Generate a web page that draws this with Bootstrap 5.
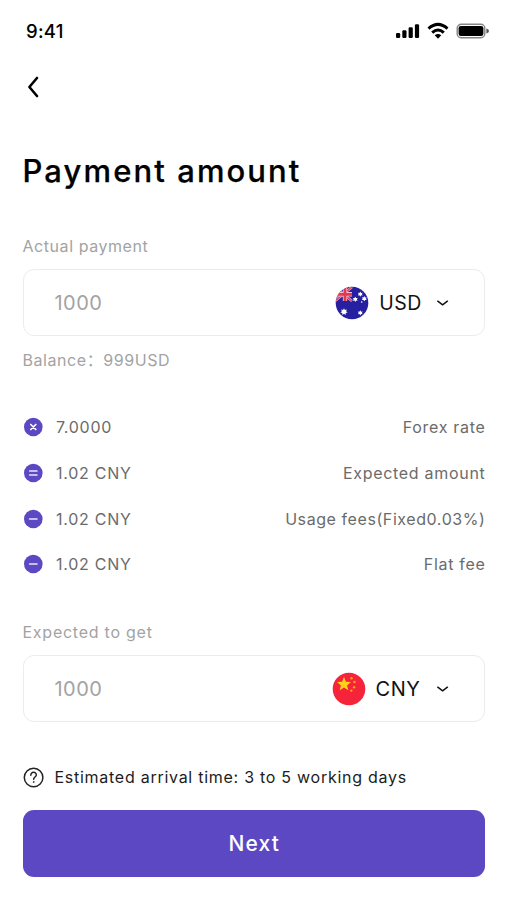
<!DOCTYPE html>
<html lang="en">
<head>
<meta charset="utf-8">
<meta name="viewport" content="width=device-width, initial-scale=1">
<title>Payment amount</title>
<link href="https://cdn.jsdelivr.net/npm/bootstrap@5.3.0/dist/css/bootstrap.min.css" rel="stylesheet">
<style>
body{font-family:Inter,"Liberation Sans",sans-serif;background:#fff;color:#000;overflow:hidden}
.screen{height:900px;padding:0 22px 0 22.5px;line-height:24px;font-size:16px;letter-spacing:.56px}
.screen svg{display:block;flex:none}
.status{height:62px;padding-left:3.5px;margin-right:-5px}
.clock{font-size:18.5px;font-weight:500;letter-spacing:.25px}
.back{height:50px;padding-left:3.5px}
.page-title{font-size:31px;font-weight:500;letter-spacing:2.1px;line-height:40px;margin:39px 0 0 0;-webkit-text-stroke:.25px #000}
.caption-text{color:#a3a3a3}
.caption-pay{margin-top:43px}
.caption-get{margin-top:21.1px;letter-spacing:.75px}
.balance{margin-top:12px}
.wide-colon{font-family:"Noto Sans CJK SC",sans-serif;line-height:1}
.amount-box{height:67px;margin-top:11px;border:1.5px solid #ececec;border-radius:11px;padding:1px 35.5px 0 31px}
.amount-input{width:120px;font-size:20px;letter-spacing:.45px;color:#a3a3a3;outline:0}
.amount-input::placeholder{color:#a3a3a3;opacity:1}
.currency{font-size:20px;color:#111;gap:10px}
.code-usd{font-size:19.5px}
.code-cny{margin:0 1.5px 0 -.5px}
.currency .chev{margin-left:4.5px}
.fees{margin-top:43px;color:#6b6b6b}
.fees li{height:45.8px}
.fees li:last-child{height:46.2px}
.fee-value{gap:13.5px;letter-spacing:.74px}
.fee-name{letter-spacing:.7px;margin-right:-.5px}
.fee-name.tight{letter-spacing:.58px}
.note{color:#1c1c1c;letter-spacing:.73px;margin-top:43.5px;gap:11px}
.btn-next{--bs-btn-bg:#5b48c2;--bs-btn-color:#fff;--bs-btn-hover-bg:#4f3db3;--bs-btn-hover-color:#fff;height:67px;margin-top:20.5px;padding:2px 0 0 1px;border:0;border-radius:11px;font-size:21px;font-weight:500;letter-spacing:1.1px}
</style>
</head>
<body>
<main class="screen d-flex flex-column">
  <div class="status d-flex align-items-center justify-content-between">
    <span class="clock">9:41</span>
    <svg width="94" height="20" viewBox="0 0 94 20">
      <rect x="0" y="12" width="4.2" height="5" rx="1.2"/><rect x="6.3" y="9.3" width="4.2" height="7.7" rx="1.2"/><rect x="12.6" y="6.3" width="4.2" height="10.7" rx="1.2"/><rect x="18.9" y="3.2" width="4.2" height="13.8" rx="1.2"/>
      <g fill="none" stroke="#000" stroke-width="3"><path d="M32.5 7.6Q42 -.8 51.5 7.6"/><path d="M36.2 11.7Q42 6.4 47.8 11.7"/></g>
      <path d="M38.7 14.3Q42 11.7 45.3 14.3L42 17.7z"/>
      <rect x="61.2" y="3.3" width="27.6" height="13.4" rx="4" fill="none" stroke="#858585" stroke-width="1.4"/>
      <rect x="62.6" y="4.9" width="24.8" height="10.2" rx="2.4"/>
      <path d="M90.4 7.6Q93 8.4 93 10T90.4 12.4z" fill="#555"/>
    </svg>
  </div>
  <div class="back d-flex align-items-center">
    <svg width="14" height="22" viewBox="0 0 14 22" fill="none" stroke="#000" stroke-width="2.6" stroke-linecap="round" stroke-linejoin="round" role="img" aria-label="Back"><path d="M11 2 3.4 11l7.6 9"/></svg>
  </div>
  <h1 class="page-title">Payment amount</h1>
  <div class="caption-text caption-pay">Actual payment</div>
  <div class="amount-box d-flex align-items-center justify-content-between">
    <input class="amount-input border-0 p-0 bg-transparent" placeholder="1000" aria-label="Actual payment">
    <div class="currency d-flex align-items-center">
      <svg width="34" height="34" viewBox="0 0 34 34">
        <defs><clipPath id="disc"><circle cx="17" cy="17" r="16.3"/></clipPath></defs>
        <g clip-path="url(#disc)"><rect width="34" height="34" fill="#261fa0"/>
        <path d="M0 1 17 15M17 1 0 15" stroke="#d9a8d0" stroke-width="2.6"/><path d="M0 1 17 15M17 1 0 15" stroke="#e83a50" stroke-width="1.3"/>
        <path d="M10 0V15M0 8.3H17" stroke="#f0c4d4" stroke-width="4.4"/><path d="M10 0V15M0 8.3H17" stroke="#e8364c" stroke-width="2.8"/></g>
        <g fill="#fff"><path d="m9 22.2.9 1.8 2-.5-.8 1.8 1.5 1.2-1.9.5v2l-1.7-1.2-1.7 1.2v-2l-1.9-.5 1.5-1.2-.8-1.8 2 .5z"/><path id="star" d="m25.3 5.5.8 1.4 1.6-.2-.8 1.4.8 1.4-1.6-.2-.8 1.4-.8-1.4-1.6.2.8-1.4-.8-1.4 1.6.2z"/><use href="#star" x="-5" y="5.2"/><use href="#star" x="4" y="4.6"/><use href="#star" x="0" y="18.8"/><circle cx="26.7" cy="16" r=".8"/></g>
      </svg>
      <span class="code-usd">USD</span>
      <svg class="chev" width="12" height="8" viewBox="0 0 12 8" fill="none" stroke="#111" stroke-width="1.5" stroke-linecap="round" stroke-linejoin="round"><path d="M.8 2.2l4.8 3.6 4.8-3.6"/></svg>
    </div>
  </div>
  <div class="caption-text balance">Balance<span class="wide-colon" lang="zh-CN">：</span>999USD</div>
  <ul class="fees list-unstyled mb-0">
    <li class="d-flex align-items-start justify-content-between"><span class="fee-value d-flex align-items-center"><svg width="20" height="20" viewBox="0 0 20 20" fill="none" stroke="#fff" stroke-width="1.7" stroke-linecap="round"><circle cx="10.3" cy="10" r="9.3" fill="#5b48c2" stroke="none"/><path d="m7.8 7.5 5 5m0-5-5 5"/></svg>7.0000</span><span class="fee-name">Forex rate</span></li>
    <li class="d-flex align-items-start justify-content-between"><span class="fee-value d-flex align-items-center"><svg width="20" height="20" viewBox="0 0 20 20" fill="none" stroke="#e8e4ff" stroke-width="1.5" stroke-linecap="round"><circle cx="10.3" cy="10" r="9.3" fill="#5b48c2" stroke="none"/><path d="M6.6 8.1H14m-7.4 3.8H14"/></svg>1.02 CNY</span><span class="fee-name">Expected amount</span></li>
    <li class="d-flex align-items-start justify-content-between"><span class="fee-value d-flex align-items-center"><svg width="20" height="20" viewBox="0 0 20 20" fill="none" stroke="#e8e4ff" stroke-width="1.6" stroke-linecap="round"><circle cx="10.3" cy="10" r="9.3" fill="#5b48c2" stroke="none"/><path d="M6.6 10H14"/></svg>1.02 CNY</span><span class="fee-name tight">Usage fees(Fixed0.03%)</span></li>
    <li class="d-flex align-items-start justify-content-between"><span class="fee-value d-flex align-items-center"><svg width="20" height="20" viewBox="0 0 20 20" fill="none" stroke="#e8e4ff" stroke-width="1.6" stroke-linecap="round"><circle cx="10.3" cy="10" r="9.3" fill="#5b48c2" stroke="none"/><path d="M6.6 10H14"/></svg>1.02 CNY</span><span class="fee-name">Flat fee</span></li>
  </ul>
  <div class="caption-text caption-get">Expected to get</div>
  <div class="amount-box d-flex align-items-center justify-content-between">
    <input class="amount-input border-0 p-0 bg-transparent" placeholder="1000" aria-label="Expected to get">
    <div class="currency d-flex align-items-center">
      <svg width="34" height="34" viewBox="0 0 34 34">
        <circle cx="17" cy="17" r="16.3" fill="#f5243b"/>
        <path fill="#ffd21a" d="m12 5 1.9 4.7 5 .4-3.8 3.3 1.2 4.9-4.3-2.7-4.3 2.7 1.2-4.9-3.8-3.3 5-.4z"/>
        <g fill="#ff9e20"><circle cx="19.5" cy="6.2" r="1.2"/><circle cx="22.4" cy="10" r="1.2"/><circle cx="22.1" cy="15.2" r="1.2"/><circle cx="19.3" cy="18.6" r="1.2"/></g>
      </svg>
      <span class="code-cny">CNY</span>
      <svg class="chev" width="12" height="8" viewBox="0 0 12 8" fill="none" stroke="#111" stroke-width="1.5" stroke-linecap="round" stroke-linejoin="round"><path d="M.8 2.2l4.8 3.6 4.8-3.6"/></svg>
    </div>
  </div>
  <div class="note d-flex align-items-center">
    <svg width="21" height="21" viewBox="0 0 21 21" fill="none" stroke="#222" stroke-width="1.5" stroke-linecap="round"><circle cx="10.6" cy="10.5" r="9.3"/><path d="M7.8 8.2C7.8 4.2 13.5 4.6 13.3 8c-.1 2-2.7 2.1-2.7 4.3"/><circle cx="10.6" cy="15" r=".5" fill="#222" stroke-width=".6"/></svg>
    <span>Estimated arrival time: 3 to 5 working days</span>
  </div>
  <button type="button" class="btn btn-next w-100">Next</button>
</main>
<script src="https://cdn.jsdelivr.net/npm/bootstrap@5.3.0/dist/js/bootstrap.bundle.min.js"></script>
</body>
</html>
